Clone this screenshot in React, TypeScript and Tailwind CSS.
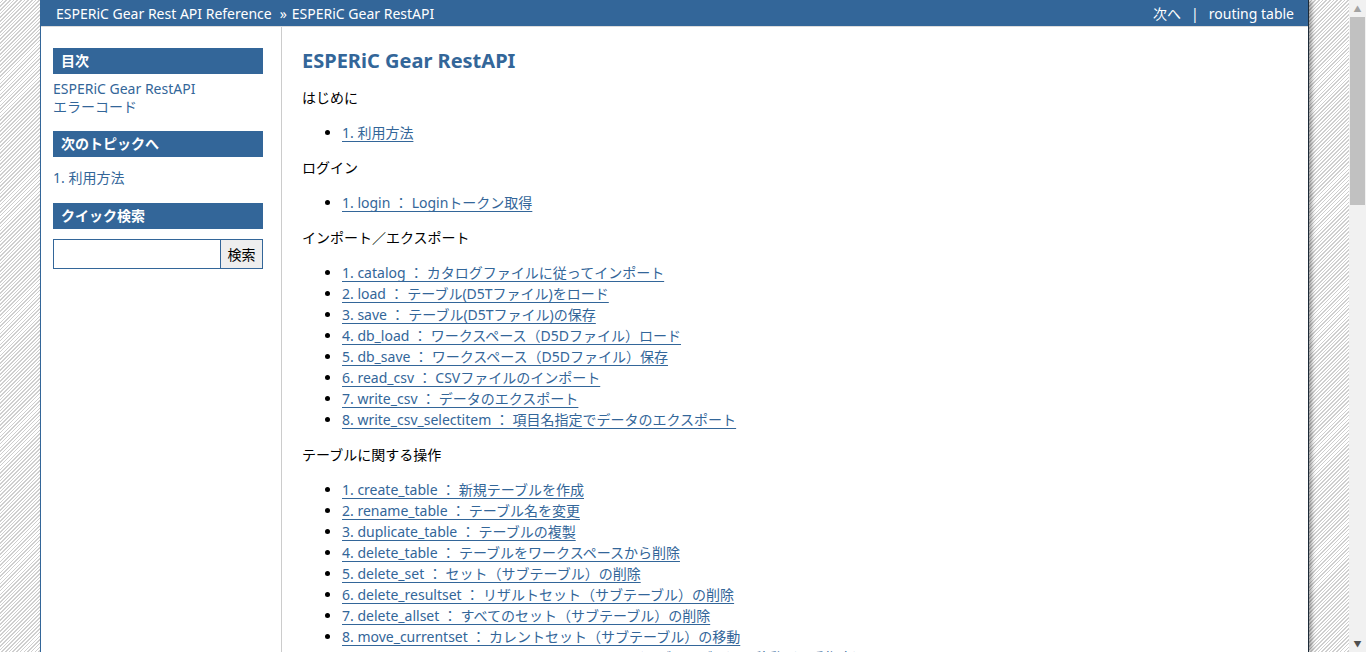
const font = "font-['Segoe_UI','Noto_Sans','Noto_Sans_CJK_JP',sans-serif]";

const sections: { title: string; items: string[] }[] = [
  { title: "はじめに", items: ["1. 利用方法"] },
  { title: "ログイン", items: ["1. login ： Loginトークン取得"] },
  {
    title: "インポート／エクスポート",
    items: [
      "1. catalog ： カタログファイルに従ってインポート",
      "2. load ： テーブル(D5Tファイル)をロード",
      "3. save ： テーブル(D5Tファイル)の保存",
      "4. db_load ： ワークスペース（D5Dファイル）ロード",
      "5. db_save ： ワークスペース（D5Dファイル）保存",
      "6. read_csv ： CSVファイルのインポート",
      "7. write_csv ： データのエクスポート",
      "8. write_csv_selectitem ： 項目名指定でデータのエクスポート",
    ],
  },
  {
    title: "テーブルに関する操作",
    items: [
      "1. create_table ： 新規テーブルを作成",
      "2. rename_table ： テーブル名を変更",
      "3. duplicate_table ： テーブルの複製",
      "4. delete_table ： テーブルをワークスペースから削除",
      "5. delete_set ： セット（サブテーブル）の削除",
      "6. delete_resultset ： リザルトセット（サブテーブル）の削除",
      "7. delete_allset ： すべてのセット（サブテーブル）の削除",
      "8. move_currentset ： カレントセット（サブテーブル）の移動",
      "9. move_currentset_order ： カレントセット（サブテーブル）の移動（順番指定）",
    ],
  },
];

function SideHead({ children }: { children: React.ReactNode }) {
  return (
    <h3 className="bg-[#336699] text-white font-bold text-[14px] leading-[26px] px-2">{children}</h3>
  );
}

export default function App() {
  return (
    <div className={`h-[652px] overflow-hidden flex ${font} text-[14px] text-black`}>
      <div className="flex-1 bg-[repeating-linear-gradient(135deg,#ffffff_0px,#ffffff_1.5px,#cfcfcf_1.5px,#cfcfcf_2.6px)]">
        <div className="ml-[40px] w-[1269px] h-[652px] bg-white border-l border-[#336699] border-r border-r-[#1c2a38] shadow-[3px_0_4px_rgba(0,0,0,0.35)] flex flex-col">
          <div className="h-[27px] shrink-0 bg-[#336699] text-white flex items-center justify-between pl-[15px] pr-[14px] border-b border-[#dcdcdc]">
            <div className="flex items-center">
              <span>ESPERiC Gear Rest API Reference</span>
              <span className="ml-[8px] mr-[5px]">»</span>
              <span>ESPERiC Gear RestAPI</span>
            </div>
            <div className="flex items-center">
              <span>次へ</span>
              <span className="mx-[10px]">|</span>
              <span>routing table</span>
            </div>
          </div>
          <div className="flex flex-1">
            <div className="w-[241px] border-r border-[#cccccc] pl-[12px] pr-[18px] pt-[21px] shrink-0">
              <SideHead>目次</SideHead>
              <div className="mt-[6px] text-[#336699] leading-[18px]">
                <div>ESPERiC Gear RestAPI</div>
                <div>エラーコード</div>
              </div>
              <div className="mt-[15px]">
                <SideHead>次のトピックへ</SideHead>
              </div>
              <div className="mt-[12px] text-[#336699] leading-[18px]">1. 利用方法</div>
              <div className="mt-[16px]">
                <SideHead>クイック検索</SideHead>
              </div>
              <div className="mt-[10px] flex h-[30px] border border-[#336699]">
                <div className="flex-1 bg-white" />
                <div className="w-[42px] border-l border-[#336699] bg-[#eeeeee] flex items-center justify-center">検索</div>
              </div>
            </div>
            <div className="flex-1 pl-[20px] pt-[19px]">
              <h1 className="text-[#336699] font-bold text-[20px] leading-[30px] mb-[11px]">ESPERiC Gear RestAPI</h1>
              {sections.map((s) => (
                <div key={s.title}>
                  <p className="mt-[8px] leading-[21px]">{s.title}</p>
                  <ul className="list-disc pl-[40px] mt-[14px] mb-[14px] leading-[21px]">
                    {s.items.map((it) => (
                      <li key={it}>
                        <a className="text-[#336699] underline underline-offset-[3px]">{it}</a>
                      </li>
                    ))}
                  </ul>
                </div>
              ))}
            </div>
          </div>
        </div>
      </div>
      <div className="w-[17px] bg-[#f1f1f1] flex flex-col items-center">
        <div className="h-[17px] flex items-center justify-center text-[#a3a3a3] text-[8px]">▲</div>
        <div className="w-[15px] h-[188px] bg-[#c1c1c1]" />
        <div className="flex-1" />
        <div className="h-[17px] flex items-center justify-center text-[#505050] text-[8px]">▼</div>
      </div>
    </div>
  );
}
